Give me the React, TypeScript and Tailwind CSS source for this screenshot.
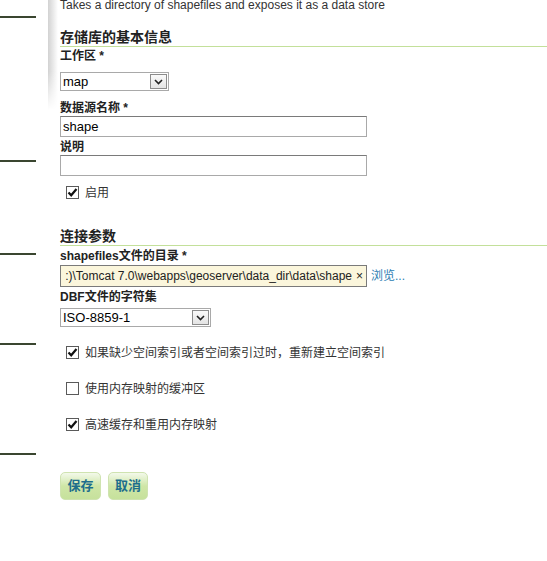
import React from 'react';

const cjk = 'font-["Liberation_Sans","Noto_Sans_CJK_SC",sans-serif]';

function Check({ checked }: { checked: boolean }) {
  return (
    <span className="flex h-[13px] w-[13px] shrink-0 items-center justify-center border border-[#5a5a5a] bg-white">
      {checked && (
        <svg width="11" height="11" viewBox="0 0 11 11">
          <path d="M1.5 5.5 L4.2 8.3 L9.5 2" fill="none" stroke="#111" strokeWidth="2.2" />
        </svg>
      )}
    </span>
  );
}

function Select({ value, width }: { value: string; width: string }) {
  return (
    <div className={`flex h-[19px] items-center border border-[#a9a9a9] bg-white ${width}`}>
      <span className="flex-1 pl-[2px] text-[13px] leading-none text-black">{value}</span>
      <span className="m-[1px] flex h-[15px] w-[17px] items-center justify-center border border-[#8c8c8c] bg-gradient-to-b from-[#fafafa] to-[#e4e4e4]">
        <svg width="9" height="6" viewBox="0 0 9 6">
          <path d="M1 1 L4.5 4.5 L8 1" fill="none" stroke="#222" strokeWidth="1.6" />
        </svg>
      </span>
    </div>
  );
}

function Label({ children }: { children: React.ReactNode }) {
  return <div className="text-[12px] font-bold leading-[14px] text-[#222]">{children}</div>;
}

function Heading({ children }: { children: React.ReactNode }) {
  return (
    <div className="border-b border-[#c3e09a] pb-[1px] text-[14px] font-bold leading-[16px] text-[#222]">
      {children}
    </div>
  );
}

function Option({ checked, label }: { checked: boolean; label: string }) {
  return (
    <div className="flex items-end gap-[6px] pl-[6px]">
      <Check checked={checked} />
      <span className="text-[12px] leading-[12px] text-[#333]">{label}</span>
    </div>
  );
}

export default function App() {
  return (
    <div className={`flex h-[561px] w-[547px] overflow-hidden bg-white ${cjk}`}>
      {/* left nav remnants */}
      <div className="flex w-[48px] shrink-0 flex-col">
        <div className="mt-[16px] h-[2px] w-[36px] bg-[#3a4630]" />
        <div className="mt-[142px] h-[2px] w-[36px] bg-[#3a4630]" />
        <div className="mt-[91px] h-[2px] w-[36px] bg-[#3a4630]" />
        <div className="mt-[88px] h-[2px] w-[36px] bg-[#3a4630]" />
        <div className="mt-[108px] h-[2px] w-[36px] bg-[#3a4630]" />
      </div>
      <div className="h-[110px] w-[10px] shrink-0 bg-gradient-to-r from-[#d2d2d2] to-white [mask-image:linear-gradient(to_bottom,black_65%,transparent)]" />

      <div className="ml-[2px] flex min-w-0 flex-1 flex-col">
        <div className="-mt-[2px] text-[12px] leading-[14px] text-[#333]">
          Takes a directory of shapefiles and exposes it as a data store
        </div>

        <div className="mt-[17px]">
          <Heading>存储库的基本信息</Heading>
        </div>
        <div className="mt-[2px]">
          <Label>工作区 *</Label>
        </div>
        <div className="mt-[9px]">
          <Select value="map" width="w-[109px]" />
        </div>
        <div className="mt-[10px]">
          <Label>数据源名称 *</Label>
        </div>
        <div className="mt-[1px] flex h-[21px] w-[307px] items-center border border-[#a9a9a9] border-t-[#7a7a7a] bg-white pl-[2px] text-[13px] text-black">
          shape
        </div>
        <div className="mt-[3px]">
          <Label>说明</Label>
        </div>
        <div className="mt-[1px] h-[21px] w-[307px] border border-[#a9a9a9] border-t-[#7a7a7a] bg-white" />
        <div className="mt-[10px]">
          <Option checked label="启用" />
        </div>

        <div className="mt-[29px]">
          <Heading>连接参数</Heading>
        </div>
        <div className="mt-[3px]">
          <Label>shapefiles文件的目录 *</Label>
        </div>
        <div className="mt-[2px] flex items-center">
          <div className="flex h-[22px] w-[307px] shrink-0 items-center overflow-hidden whitespace-nowrap border border-[#7a7a7a] bg-[#fbf6dc] pr-[3px] text-[12px] text-[#222]">
            <div className="flex min-w-0 flex-1 justify-end overflow-hidden">
              <span className="shrink-0">:)\Tomcat 7.0\webapps\geoserver\data_dir\data\shape</span>
            </div>
            <span className="ml-[4px] shrink-0">×</span>
          </div>
          <span className="ml-[4px] shrink-0 text-[12px] text-[#2b7db2]">浏览...</span>
        </div>
        <div className="mt-[3px]">
          <Label>DBF文件的字符集</Label>
        </div>
        <div className="mt-[4px]">
          <Select value="ISO-8859-1" width="w-[151px]" />
        </div>

        <div className="mt-[19px]">
          <Option checked label="如果缺少空间索引或者空间索引过时，重新建立空间索引" />
        </div>
        <div className="mt-[23px]">
          <Option checked={false} label="使用内存映射的缓冲区" />
        </div>
        <div className="mt-[23px]">
          <Option checked label="高速缓存和重用内存映射" />
        </div>

        <div className="mt-[41px] flex gap-[7px]">
          <button className="h-[28px] w-[41px] rounded-[5px] border border-[#cfe3b0] bg-gradient-to-b from-[#f3f9ea] via-[#cfe6a6] to-[#c6e19c] text-[13px] font-bold text-[#1e6e8c]">
            保存
          </button>
          <button className="h-[28px] w-[40px] rounded-[5px] border border-[#cfe3b0] bg-gradient-to-b from-[#f3f9ea] via-[#cfe6a6] to-[#c6e19c] text-[13px] font-bold text-[#1e6e8c]">
            取消
          </button>
        </div>
      </div>
    </div>
  );
}
